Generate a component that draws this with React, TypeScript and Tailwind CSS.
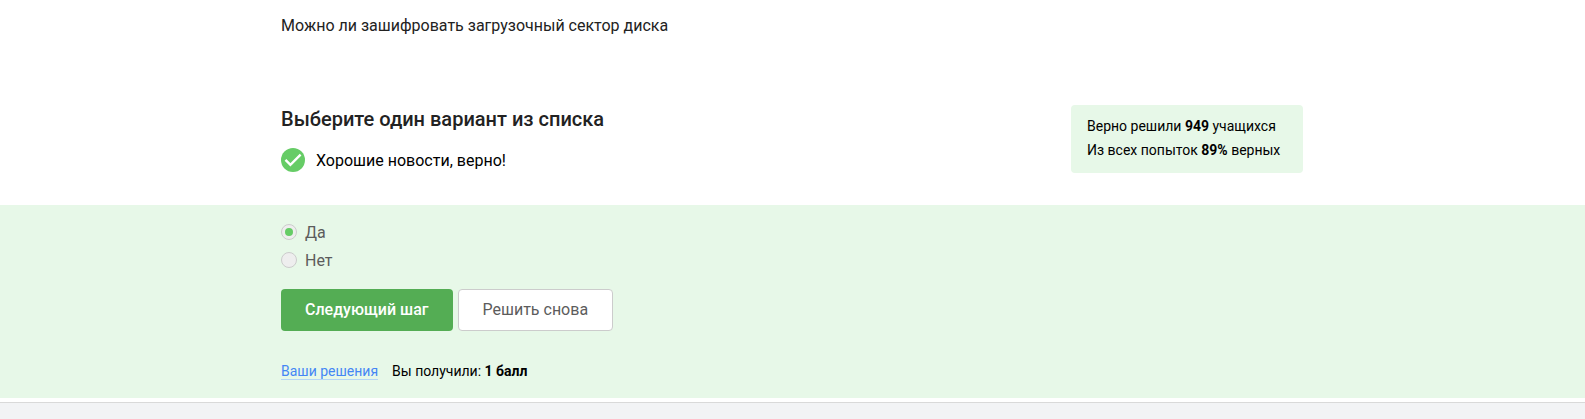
import { useState } from "react";

const container = "mx-auto w-full max-w-[1023px] pr-px";
const options = ["Да", "Нет"];

function CheckIcon() {
  return (
    <svg viewBox="0 0 24 24" className="size-6 shrink-0" aria-hidden="true">
      <circle cx="12" cy="12" r="12" fill="#66cc66" />
      <path d="M4.5 11.9 9.4 16.8 19.6 6.6" fill="none" stroke="#fff" strokeWidth="2.4" />
    </svg>
  );
}

function Stats() {
  return (
    <div className="min-w-[232px] shrink-0 rounded bg-[#e7f8e8] px-4 pt-[9px] pb-[11px] text-sm leading-6">
      <p>
        Верно решили <b>949</b> учащихся
      </p>
      <p>
        Из всех попыток <b>89%</b> верных
      </p>
    </div>
  );
}

export default function App() {
  const [answer, setAnswer] = useState("Да");

  return (
    <div className="min-h-screen bg-[#f2f3f5] font-['Roboto',sans-serif] text-base leading-6 text-black">
      <main className="border-b border-[#d9d9d9] bg-white pb-1">
        <div className={container}>
          <p className="pt-[14px] text-[#222]">Можно ли зашифровать загрузочный сектор диска</p>
          <div className="flex items-start justify-between pt-[67px] pb-[31px]">
            <div>
              <h2 className="text-xl leading-7 font-medium text-[#222]">Выберите один вариант из списка</h2>
              <div className="mt-[15px] flex items-start gap-[11px]">
                <CheckIcon />
                <p className="leading-[26px]">Хорошие новости, верно!</p>
              </div>
            </div>
            <Stats />
          </div>
        </div>

        <form className="bg-[#e7f8e8] pt-[14px] pb-[15px]" onSubmit={(e) => e.preventDefault()}>
          <div className={container}>
            <div role="radiogroup" aria-label="Выберите один вариант из списка">
              {options.map((option) => (
                <label key={option} className="flex h-7 items-start gap-2 text-[#5c5c5c]">
                  <input
                    type="radio"
                    name="answer"
                    checked={answer === option}
                    onChange={() => setAnswer(option)}
                    className="mt-[5px] grid size-4 appearance-none place-items-center rounded-full border border-[#ccc] bg-[#eee] before:size-2 before:rounded-full checked:before:bg-[#66cc66]"
                  />
                  <span className="leading-7">{option}</span>
                </label>
              ))}
            </div>
            <div className="mt-[14px] flex gap-[5px]">
              <button type="button" className="h-[42px] rounded bg-[#54ad54] px-6 font-medium text-white">
                Следующий шаг
              </button>
              <button type="button" className="h-[42px] rounded border border-[#ccc] bg-white px-6 text-[#5c5c5c]">
                Решить снова
              </button>
            </div>
            <div className="mt-7 flex gap-3.5 text-sm leading-6">
              <p>
                <a href="#solutions" className="border-b border-[#b5d6f5] text-[#4486f5]">
                  Ваши решения
                </a>
              </p>
              <p>
                Вы получили: <b>1 балл</b>
              </p>
            </div>
          </div>
        </form>
      </main>
    </div>
  );
}
